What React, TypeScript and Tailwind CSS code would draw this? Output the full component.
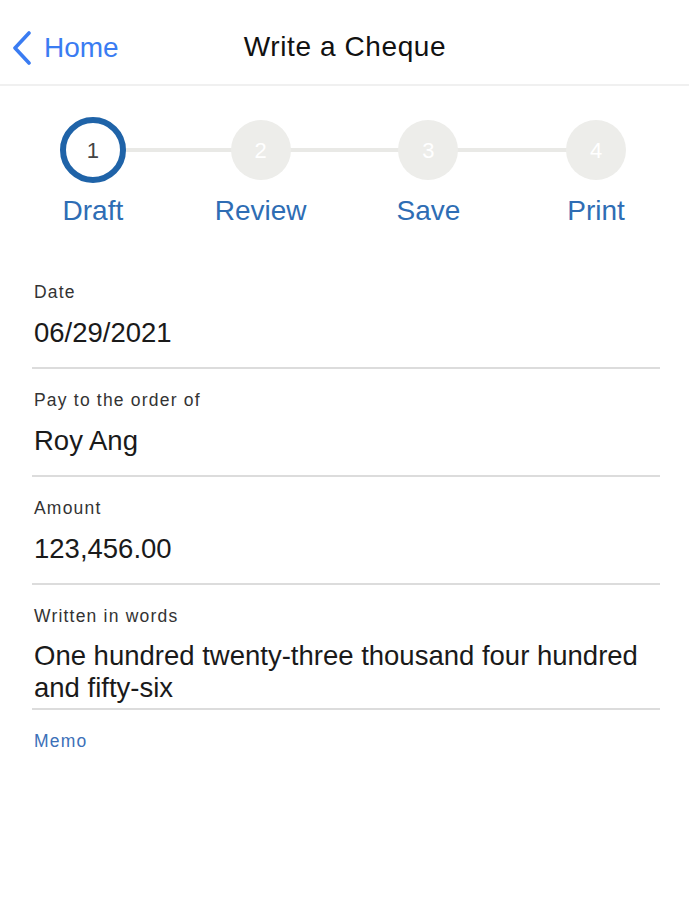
import React from "react";

const steps = [
  { n: "1", label: "Draft", active: true },
  { n: "2", label: "Review", active: false },
  { n: "3", label: "Save", active: false },
  { n: "4", label: "Print", active: false },
];

function Field({ label, value, multi }: { label: string; value: string; multi?: boolean }) {
  return (
    <div className="pt-[21px]">
      <div className="pl-[2px] text-[17.5px] leading-[20px] tracking-[1.2px] text-[#333333]">{label}</div>
      <div
        className={
          multi
            ? "mt-[14px] pl-[2px] text-[27.5px] leading-[32px] text-[#1a1a1a]"
            : "mt-[15px] pl-[2px] text-[27.5px] leading-[32px] text-[#1a1a1a]"
        }
      >
        {value}
      </div>
      <div className={multi ? "mt-[4px] h-[2px] bg-[#dcdcdc]" : "mt-[18px] h-[2px] bg-[#dcdcdc]"} />
    </div>
  );
}

export default function App() {
  return (
    <div
      className="w-[689px] h-[900px] bg-white"
      style={{ fontFamily: '"Liberation Sans", Arial, sans-serif' }}
    >
      {/* Header */}
      <div className="h-[86px] pt-[10px] border-b-2 border-[#f0f0f0] grid grid-cols-[1fr_auto_1fr] items-center">
        <div className="flex items-center pl-[12px] pt-[1px]">
          <svg width="20" height="34" viewBox="0 0 20 34" fill="none">
            <path d="M17 2 L3 17 L17 32" stroke="#3a7cf2" strokeWidth="3.6" strokeLinecap="round" strokeLinejoin="round" />
          </svg>
          <span className="ml-[12px] text-[28px] leading-[32px] text-[#3a7cf2]">Home</span>
        </div>
        <div className="text-[28px] leading-[32px] tracking-[0.6px] text-[#111111] pl-[1px]">Write a Cheque</div>
        <div />
      </div>

      {/* Steps */}
      <div className="relative grid grid-cols-4 px-[9px] pt-[31px]">
        <div className="absolute left-[93px] right-[92px] top-[62px] h-[4px] bg-[#e9e9e6]" />
        {steps.map((s) => (
          <div key={s.n} className="relative flex flex-col items-center">
            <div className="h-[66px] flex items-center justify-center">
              {s.active ? (
                <div className="w-[66px] h-[66px] rounded-full border-[6px] border-[#1f63a8] bg-white flex items-center justify-center text-[22px] text-[#444444]">
                  {s.n}
                </div>
              ) : (
                <div className="w-[60px] h-[60px] rounded-full bg-[#ededea] flex items-center justify-center text-[22px] text-white">
                  {s.n}
                </div>
              )}
            </div>
            <div className="mt-[12px] text-[28px] leading-[32px] text-[#2e6db4]">{s.label}</div>
          </div>
        ))}
      </div>

      {/* Form */}
      <div className="ml-[32px] w-[628px] mt-[34px]">
        <Field label="Date" value="06/29/2021" />
        <Field label="Pay to the order of" value="Roy Ang" />
        <Field label="Amount" value="123,456.00" />
        <Field label="Written in words" value="One hundred twenty-three thousand four hundred and fifty-six" multi />
        <div className="pt-[21px] pl-[2px] text-[17.5px] leading-[20px] tracking-[1.2px] text-[#3c70b8]">Memo</div>
      </div>
    </div>
  );
}
